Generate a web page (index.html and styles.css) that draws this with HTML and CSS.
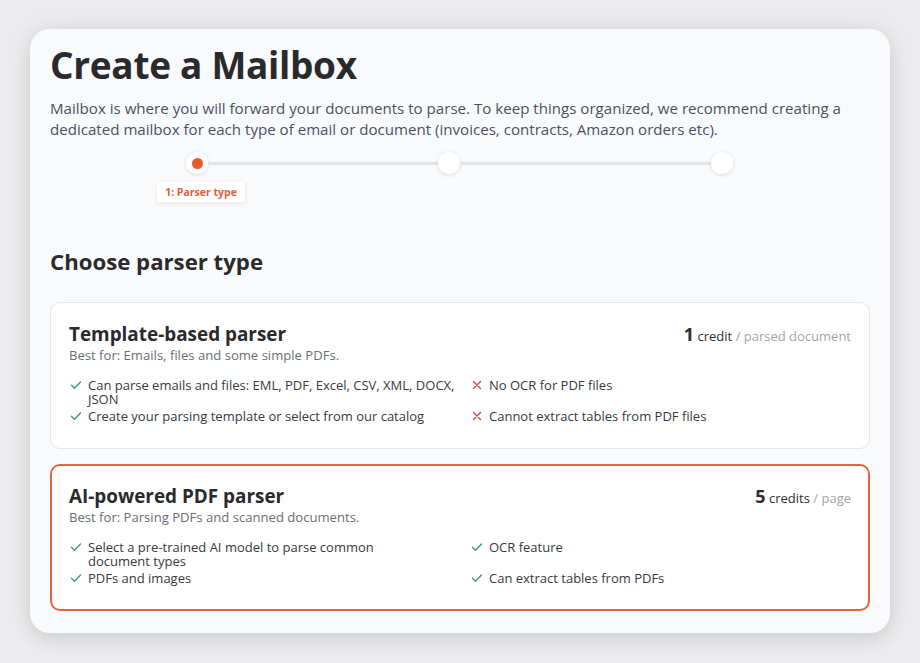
FILE: index.html
```html
<!DOCTYPE html>
<html>
<head>
<meta charset="utf-8">
<link rel="stylesheet" href="styles.css">
</head>
<body>
<div class="panel">
  <h1 class="title">Create a Mailbox</h1>
  <p class="intro">Mailbox is where you will forward your documents to parse. To keep things organized, we recommend creating a dedicated mailbox for each type of email or document (invoices, contracts, Amazon orders etc).</p>

  <div class="stepper">
    <div class="step active">
      <span class="dot"><span class="inner"></span></span>
      <span class="step-label">1: Parser type</span>
    </div>
    <div class="seg seg1"></div>
    <div class="step"><span class="dot"></span></div>
    <div class="seg seg2"></div>
    <div class="step"><span class="dot"></span></div>
  </div>

  <h2 class="section">Choose parser type</h2>

  <div class="card">
    <div class="card-head">
      <div>
        <div class="card-title">Template-based parser</div>
        <div class="card-sub">Best for: Emails, files and some simple PDFs.</div>
      </div>
      <div class="price"><b>1</b> <span class="unit">credit</span> <span class="per">/ parsed document</span></div>
    </div>
    <ul class="features">
      <li><svg class="ic ok" viewBox="0 0 12 12"><path d="M1.5 6.3 L4.5 9.2 L10.5 3"/></svg><span>Can parse emails and files: EML, PDF, Excel, CSV, XML, DOCX,<br>JSON</span></li>
      <li><svg class="ic no" viewBox="0 0 12 12"><path d="M2.5 2.5 L9.5 9.5 M9.5 2.5 L2.5 9.5"/></svg><span>No OCR for PDF files</span></li>
      <li><svg class="ic ok" viewBox="0 0 12 12"><path d="M1.5 6.3 L4.5 9.2 L10.5 3"/></svg><span>Create your parsing template or select from our catalog</span></li>
      <li><svg class="ic no" viewBox="0 0 12 12"><path d="M2.5 2.5 L9.5 9.5 M9.5 2.5 L2.5 9.5"/></svg><span>Cannot extract tables from PDF files</span></li>
    </ul>
  </div>

  <div class="card selected">
    <div class="card-head">
      <div>
        <div class="card-title">AI-powered PDF parser</div>
        <div class="card-sub">Best for: Parsing PDFs and scanned documents.</div>
      </div>
      <div class="price"><b>5</b> <span class="unit">credits</span> <span class="per">/ page</span></div>
    </div>
    <ul class="features">
      <li><svg class="ic ok" viewBox="0 0 12 12"><path d="M1.5 6.3 L4.5 9.2 L10.5 3"/></svg><span>Select a pre-trained AI model to parse common<br>document types</span></li>
      <li><svg class="ic ok" viewBox="0 0 12 12"><path d="M1.5 6.3 L4.5 9.2 L10.5 3"/></svg><span>OCR feature</span></li>
      <li><svg class="ic ok" viewBox="0 0 12 12"><path d="M1.5 6.3 L4.5 9.2 L10.5 3"/></svg><span>PDFs and images</span></li>
      <li><svg class="ic ok" viewBox="0 0 12 12"><path d="M1.5 6.3 L4.5 9.2 L10.5 3"/></svg><span>Can extract tables from PDFs</span></li>
    </ul>
  </div>
</div>
</body>
</html>
```

FILE: styles.css
```css
* { box-sizing: border-box; }
html, body { margin: 0; padding: 0; }
body {
  background: #ececee;
  font-family: "Open Sans", "DejaVu Sans", sans-serif;
  color: #2b2b2e;
  width: 920px;
  height: 663px;
  overflow: hidden;
  padding: 29px 30px 0 30px;
}
.panel {
  background: #f9fafc;
  border-radius: 20px;
  width: 860px;
  height: 604px;
  padding: 14px 20px 0 20px;
  box-shadow: 0 6px 18px rgba(0,0,0,0.10), 0 0 30px rgba(0,0,0,0.05);
}
.title {
  margin: 0;
  font-size: 37px;
  line-height: 44px;
  font-weight: 700;
  letter-spacing: -0.3px;
  color: #2a2a2c;
}
.intro {
  margin: 11px 0 0 0;
  font-size: 15.1px;
  line-height: 21px;
  color: #4c5061;
}
.stepper {
  display: flex;
  align-items: flex-start;
  margin: 12px 0 0 136px;
  height: 95px;
}
.step {
  width: 22px;
  display: flex;
  flex-direction: column;
  align-items: center;
}
.dot {
  width: 22px;
  height: 22px;
  border-radius: 50%;
  background: #fff;
  box-shadow: 0 1px 4px rgba(0,0,0,0.12);
  display: flex;
  align-items: center;
  justify-content: center;
}
.inner {
  width: 11px;
  height: 11px;
  border-radius: 50%;
  background: #e9592c;
}
.seg {
  height: 3px;
  background: #e4e5ea;
  margin-top: 9.5px;
}
.seg1 { width: 230px; }
.seg2 { width: 251px; }
.step-label {
  margin-top: 8px;
  margin-left: 8px;
  white-space: nowrap;
  background: #fff;
  color: #e0603a;
  font-size: 10.5px;
  line-height: 14px;
  font-weight: 700;
  padding: 3px 8px;
  border-radius: 3px;
  box-shadow: 0 2px 6px rgba(0,0,0,0.08);
}
.section {
  margin: 0;
  font-size: 22.2px;
  line-height: 30px;
  font-weight: 700;
  color: #2a2a2c;
}
.card {
  margin-top: 25px;
  background: #fff;
  border: 1px solid #e6e7eb;
  border-radius: 10px;
  height: 147px;
  padding: 18px 18px 0 18px;
}
.card.selected {
  margin-top: 15px;
  border: 2px solid #e0673f;
  padding: 17px 17px 0 17px;
}
.card-head {
  display: flex;
  justify-content: space-between;
  align-items: flex-start;
}
.card-title {
  font-size: 18.9px;
  line-height: 26px;
  font-weight: 700;
  color: #2a2a2c;
}
.card-sub {
  font-size: 13.1px;
  line-height: 16px;
  color: #6a6e76;
}
.price {
  font-size: 13px;
  line-height: 26px;
  color: #2e2e30;
}
.price b { font-size: 18px; font-weight: 700; }
.price .per { color: #a2a5ab; }
.features {
  list-style: none;
  margin: 15px 0 0 0;
  padding: 0;
  display: grid;
  grid-template-columns: 401px 1fr;
  row-gap: 3px;
}
.features li {
  display: flex;
  align-items: flex-start;
  font-size: 13px;
  line-height: 14px;
  color: #38393c;
}
.ic {
  width: 12px;
  height: 12px;
  flex: none;
  margin: 1px 6px 0 1px;
  fill: none;
  stroke-width: 1.4;
  stroke-linecap: round;
  stroke-linejoin: round;
}
.ic.ok { stroke: #3e9a78; }
.ic.no { stroke: #c2504c; }
```
